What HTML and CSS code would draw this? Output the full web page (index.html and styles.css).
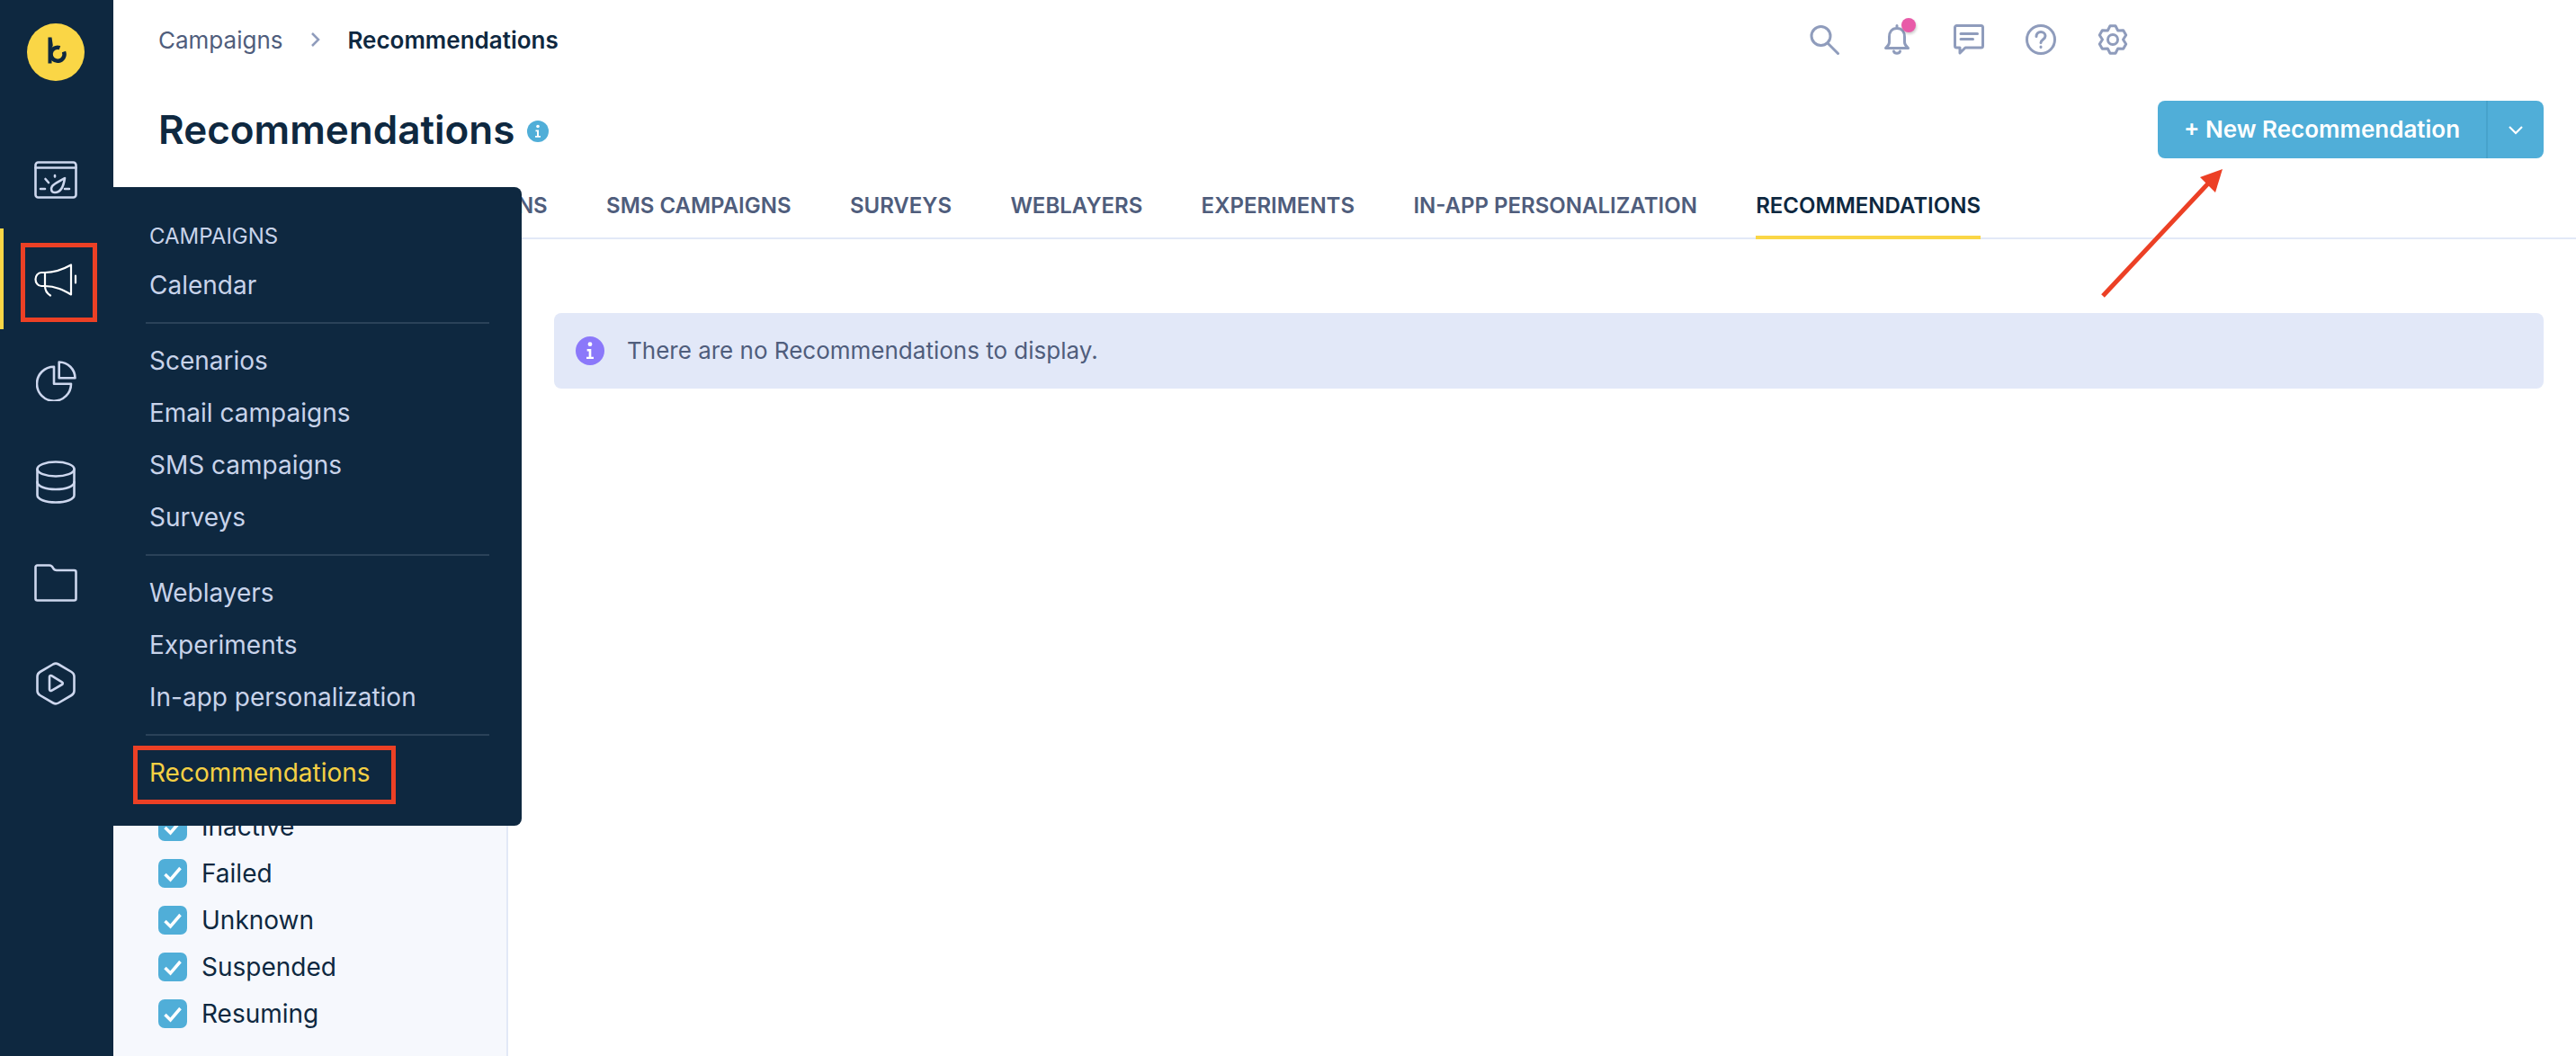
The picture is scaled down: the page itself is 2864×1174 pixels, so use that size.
FILE: index.html
```html
<!DOCTYPE html>
<html lang="en">
<head>
  <meta charset="UTF-8">
  <title>Recommendations</title>
  <link rel="stylesheet" href="styles.css">
</head>
<body>
  <aside class="rail">
    <div class="logo">
      <svg width="64" height="64" viewBox="0 0 64 64">
        <circle cx="32" cy="32" r="32" fill="#fad646"/>
        <path d="M23.5 15.5h4l1.300 9-1.300 3v17h-4z" fill="#0e2840"/>
        <path d="M41 31.500a7.500 7.500 0 1 1-4.500-4.300" fill="none" stroke="#0e2840" stroke-width="4.500"/>
      </svg>
    </div>
    <nav class="rail-nav">
      <a class="rail-item">
        <svg width="48" height="42" viewBox="0 0 48 42" class="ico">
          <rect x="1.500" y="1.500" width="45" height="39" rx="3"/>
          <path d="M1.500 7.500h45M7 31h5M34 31h5M12.500 20l3.500 4M23 16v1.500"/>
          <path d="M34 19c-1 7-4 16-11 16-4 0-5-4-3-7 2-3 9-6 14-9z"/>
        </svg>
      </a>
      <a class="rail-item active">
        <svg width="48" height="37" viewBox="0 0 48 37" class="ico thin">
          <path d="M41 1.500V34.500C33 30 24 25 12 25H8C4 25 1.500 21 1.500 17.500 1.500 14 4 10 8 10H12C24 10 33 6 41 1.500z"/>
          <path d="M12 10V25C12 30 14 33 18 35.500M46 13.500V21.500"/>
        </svg>
        <span class="mark"></span>
      </a>
      <a class="rail-item">
        <svg width="45" height="45" viewBox="0 0 45 45" class="ico">
          <path d="M20 6.700V25.700H39A19 19 0 1 1 20 6.700z"/>
          <path d="M25.700 1.500V19.300H43.500A18 18 0 0 0 25.700 1.500z"/>
        </svg>
      </a>
      <a class="rail-item">
        <svg width="44" height="48" viewBox="0 0 44 48" class="ico">
          <ellipse cx="22" cy="9.500" rx="20.500" ry="8"/>
          <path d="M1.500 9.500V38.500C1.500 43 10.500 46.500 22 46.500S42.500 43 42.500 38.500V9.500"/>
          <path d="M1.500 24C1.500 28.500 10.500 32 22 32S42.500 28.500 42.500 24"/>
        </svg>
      </a>
      <a class="rail-item">
        <svg width="48" height="42" viewBox="0 0 48 42" class="ico">
          <path d="M3.500 1.500H17c2 0 3 1 4 3s2 2.500 4 2.500H44.500a2 2 0 0 1 2 2V38.500a2 2 0 0 1-2 2H3.500a2 2 0 0 1-2-2V3.500a2 2 0 0 1 2-2z"/>
        </svg>
      </a>
      <a class="rail-item">
        <svg width="44" height="48" viewBox="0 0 44 48" class="ico">
          <path d="M19 2.500a6 6 0 0 1 6 0L39.500 11a6 6 0 0 1 3 5V32a6 6 0 0 1-3 5L25 45.500a6 6 0 0 1-6 0L4.500 37a6 6 0 0 1-3-5V16a6 6 0 0 1 3-5z"/>
          <path d="M15 16.500a1.500 1.500 0 0 1 2.200-1.300L29 22.400a1.500 1.500 0 0 1 0 2.600L17.200 31.800A1.500 1.500 0 0 1 15 30.500z"/>
        </svg>
      </a>
    </nav>
  </aside>

  <div class="flyout">
    <div class="flyout-title">CAMPAIGNS</div>
    <a class="flyout-item">Calendar</a>
    <div class="flyout-line"></div>
    <a class="flyout-item">Scenarios</a>
    <a class="flyout-item">Email campaigns</a>
    <a class="flyout-item">SMS campaigns</a>
    <a class="flyout-item">Surveys</a>
    <div class="flyout-line"></div>
    <a class="flyout-item">Weblayers</a>
    <a class="flyout-item">Experiments</a>
    <a class="flyout-item">In-app personalization</a>
    <div class="flyout-line"></div>
    <a class="flyout-item current">Recommendations<span class="mark"></span></a>
  </div>

  <main class="main">
    <header class="topbar">
      <div class="crumbs">
        <span class="crumb">Campaigns</span>
        <svg width="12" height="18" viewBox="0 0 12 18" class="crumb-sep"><path d="M2 2l7 7-7 7"/></svg>
        <span class="crumb-now">Recommendations</span>
      </div>
      <div class="tools">
        <svg width="34" height="34" viewBox="0 0 34 34" class="tool"><circle cx="12.500" cy="13" r="10.500"/><path d="M20 21l11.500 11.500"/></svg>
        <span class="bell">
          <svg width="34" height="34" viewBox="0 0 34 34" class="tool"><path d="M17 4.500C11 4.500 8.500 9 8.500 14V20C8.500 23 6 25 4.500 26.500H29.500C28 25 25.500 23 25.500 20V14C25.500 9 23 4.500 17 4.500zM17 1.500v3M13.500 30c1 3 6 3 7 0"/></svg>
          <span class="dot"></span>
        </span>
        <svg width="34" height="34" viewBox="0 0 34 34" class="tool"><path d="M3.500 1.500H30.500a2 2 0 0 1 2 2V24a2 2 0 0 1-2 2H13L7 32V26H3.500a2 2 0 0 1-2-2V3.500a2 2 0 0 1 2-2zM8 10.500H26.500M8 16.500H21.500"/></svg>
        <svg width="34" height="34" viewBox="0 0 34 34" class="tool"><circle cx="17" cy="17" r="15.500"/><path d="M12 13.500c0-3 2.200-5 5-5s5 2 5 4.500c0 4-5 4-5 7.500M17 25v.500"/></svg>
        <svg width="34" height="34" viewBox="0 0 34 34" class="tool"><path d="M14 1.800h6L22.700 7l6-.200 3 5.150L28.500 17l3.200 5.050-3 5.150-6-.200L20 32.200h-6L11.300 27l-6 .200-3-5.150L5.500 17 2.300 11.950l3-5.150 6 .200z"/><circle cx="17" cy="17" r="5.500"/></svg>
      </div>
    </header>

    <section class="head">
      <h1 class="title">Recommendations
        <svg width="24" height="24" viewBox="0 0 24 24" class="info"><circle cx="12" cy="12" r="12" fill="#50aed8"/><circle cx="12" cy="6.500" r="1.800" fill="#fff"/><path d="M9.500 10.500H13V17h2v1.800H9V17h2v-4.700H9.500z" fill="#fff"/></svg>
      </h1>
      <div class="split">
        <button class="split-main">+ New Recommendation</button>
        <button class="split-more">
          <svg width="18" height="11" viewBox="0 0 18 11"><path d="M2 2l7 7 7-7" fill="none" stroke="#fff" stroke-width="2.200"/></svg>
        </button>
      </div>
    </section>

    <nav class="tabs">
      <a class="tab">SCENARIOS</a>
      <a class="tab">EMAIL CAMPAIGNS</a>
      <a class="tab">SMS CAMPAIGNS</a>
      <a class="tab">SURVEYS</a>
      <a class="tab">WEBLAYERS</a>
      <a class="tab">EXPERIMENTS</a>
      <a class="tab">IN-APP PERSONALIZATION</a>
      <a class="tab on">RECOMMENDATIONS</a>
    </nav>

    <div class="content">
      <aside class="filters">
        <label class="check"><svg width="32" height="32" viewBox="0 0 32 32"><rect width="32" height="32" rx="7" fill="#50aed8"/><path d="M7.500 17l6 6 11-13" fill="none" stroke="#fff" stroke-width="3.500"/></svg>Inactive</label>
        <label class="check"><svg width="32" height="32" viewBox="0 0 32 32"><rect width="32" height="32" rx="7" fill="#50aed8"/><path d="M7.500 17l6 6 11-13" fill="none" stroke="#fff" stroke-width="3.500"/></svg>Failed</label>
        <label class="check"><svg width="32" height="32" viewBox="0 0 32 32"><rect width="32" height="32" rx="7" fill="#50aed8"/><path d="M7.500 17l6 6 11-13" fill="none" stroke="#fff" stroke-width="3.500"/></svg>Unknown</label>
        <label class="check"><svg width="32" height="32" viewBox="0 0 32 32"><rect width="32" height="32" rx="7" fill="#50aed8"/><path d="M7.500 17l6 6 11-13" fill="none" stroke="#fff" stroke-width="3.500"/></svg>Suspended</label>
        <label class="check"><svg width="32" height="32" viewBox="0 0 32 32"><rect width="32" height="32" rx="7" fill="#50aed8"/><path d="M7.500 17l6 6 11-13" fill="none" stroke="#fff" stroke-width="3.500"/></svg>Resuming</label>
      </aside>
      <div class="list">
        <div class="alert">
          <svg width="32" height="32" viewBox="0 0 24 24"><circle cx="12" cy="12" r="12" fill="#8b78fa"/><circle cx="12" cy="6.500" r="1.800" fill="#fff"/><path d="M9.500 10.500H13V17h2v1.800H9V17h2v-4.700H9.500z" fill="#fff"/></svg>
          <span class="alert-text">There are no Recommendations to display.</span>
        </div>
      </div>
    </div>
  </main>

  <svg class="arrow" width="150" height="155" viewBox="0 0 150 155">
    <path d="M8 149L125 24" fill="none" stroke="#ec4025" stroke-width="5"/>
    <path d="M141 8L116 17 133 34z" fill="#ec4025"/>
  </svg>
</body>
</html>
```

FILE: styles.css
```css
* {
  box-sizing: border-box;
}
html, body {
  height: 100%;
}
body {
  margin: 0;
  display: flex;
  overflow: hidden;
  font-family: Inter, "Noto Sans", sans-serif;
  background: #fff;
  color: #0e2840;
}

/* left rail */
.rail {
  width: 126px;
  flex: none;
  background: #0e2840;
}
.logo {
  display: flex;
  justify-content: center;
  padding-top: 26px;
  height: 142px;
}
.logo svg {
  margin-left: -2px;
}
.rail-item {
  position: relative;
  height: 112px;
  display: flex;
  align-items: center;
  justify-content: center;
  padding-top: 3px;
  color: #cdd7ee;
}
.rail-item svg {
  margin-left: -2px;
}
.rail-item.active {
  color: #fff;
  border-left: 4px solid #fad646;
  padding-right: 4px;
}
.ico {
  fill: none;
  stroke: currentColor;
  stroke-width: 2.600;
  stroke-linecap: round;
  stroke-linejoin: round;
}
.ico.thin {
  stroke-width: 2.200;
}

/* red boxes drawn on the screenshot */
.mark {
  position: absolute;
  border: 5px solid #ec4025;
}
.rail-item .mark {
  left: 19px;
  top: 16px;
  width: 85px;
  height: 88px;
}
.flyout-item .mark {
  left: 22px;
  top: -1px;
  width: 292px;
  height: 65px;
}

/* campaigns flyout */
.flyout {
  position: absolute;
  left: 126px;
  top: 208px;
  width: 454px;
  height: 710px;
  padding-top: 40px;
  background: #0e2840;
  border-radius: 0 8px 8px 0;
  z-index: 5;
}
.flyout-title {
  height: 40px;
  padding-left: 40px;
  font-size: 24px;
  line-height: 30px;
  color: #c8d3ea;
}
.flyout-item {
  position: relative;
  display: block;
  height: 58px;
  padding-left: 40px;
  font-size: 28px;
  line-height: 58px;
  color: #c8d3ea;
}
.flyout-item.current {
  color: #f5d044;
}
.flyout-line {
  height: 2px;
  margin: 12px 36px 12px;
  background: #2a4259;
}

/* main column */
.main {
  flex: 1;
  display: flex;
  flex-direction: column;
  min-width: 0;
}
.topbar {
  height: 90px;
  flex: none;
  display: flex;
  align-items: center;
  justify-content: space-between;
  padding: 0 498px 2px 50px;
}
.crumbs {
  display: flex;
  align-items: center;
  font-size: 26px;
}
.crumb {
  color: #4f5d7c;
}
.crumb-sep {
  margin: 0 29px 0 31px;
  fill: none;
  stroke: #8f9cbc;
  stroke-width: 2.500;
}
.crumb-now {
  font-weight: 600;
}
.tools {
  display: flex;
  align-items: center;
  gap: 46px;
}
.tool {
  display: block;
  fill: none;
  stroke: #8f9cbc;
  stroke-width: 3;
  stroke-linecap: round;
  stroke-linejoin: round;
}
.bell {
  position: relative;
  display: block;
}
.dot {
  position: absolute;
  left: 22px;
  top: -7px;
  width: 16px;
  height: 16px;
  border-radius: 50%;
  background: #e85aa8;
  box-shadow: 1px 2px 3px rgba(0, 0, 0, 0.2);
}

.head {
  flex: none;
  display: flex;
  align-items: center;
  justify-content: space-between;
  height: 64px;
  margin-top: 22px;
  padding: 0 36px 0 50px;
}
.title {
  display: flex;
  align-items: center;
  gap: 14px;
  margin: 0;
  font-size: 44px;
  font-weight: 600;
  line-height: 64px;
}
.info {
  margin-top: 4px;
}
.split {
  display: flex;
  height: 64px;
}
.split button {
  border: 0;
  background: #50aed8;
  color: #fff;
  font: inherit;
}
.split .split-main {
  width: 367px;
  padding-bottom: 3px;
  font-size: 26px;
  font-weight: 600;
  border-radius: 8px 0 0 8px;
  border-right: 2px solid #47a3cc;
}
.split .split-more {
  width: 62px;
  padding: 0;
  border-radius: 0 8px 8px 0;
}

.tabs {
  flex: none;
  display: flex;
  gap: 65.300px;
  height: 90px;
  padding-left: 51px;
  border-bottom: 2px solid #e2e9f7;
}
.tab {
  height: 90px;
  padding-top: 39px;
  font-size: 24px;
  font-weight: 600;
  line-height: 28px;
  color: #4f5d7c;
  white-space: nowrap;
}
.tab.on {
  color: #0e2840;
  border-bottom: 4px solid #fad646;
}

.content {
  flex: 1;
  display: flex;
  min-height: 0;
}
.filters {
  width: 439px;
  flex: none;
  display: flex;
  flex-direction: column;
  justify-content: flex-end;
  padding: 0 0 21px 50px;
  background: #f6f8fd;
  border-right: 2px solid #e2e9f7;
}
.check {
  display: flex;
  align-items: center;
  gap: 16px;
  height: 52px;
  font-size: 28px;
  color: #0e2840;
}
.check svg {
  flex: none;
}
.list {
  flex: 1;
  padding: 82px 36px 0 51px;
}
.alert {
  display: flex;
  align-items: center;
  gap: 25px;
  height: 84px;
  padding-left: 24px;
  background: #e2e8f8;
  border-radius: 8px;
  font-size: 26px;
  color: #4f5d7c;
}
.alert-text {
  padding-bottom: 2px;
}

.arrow {
  position: absolute;
  left: 2330px;
  top: 180px;
  z-index: 6;
}
```
